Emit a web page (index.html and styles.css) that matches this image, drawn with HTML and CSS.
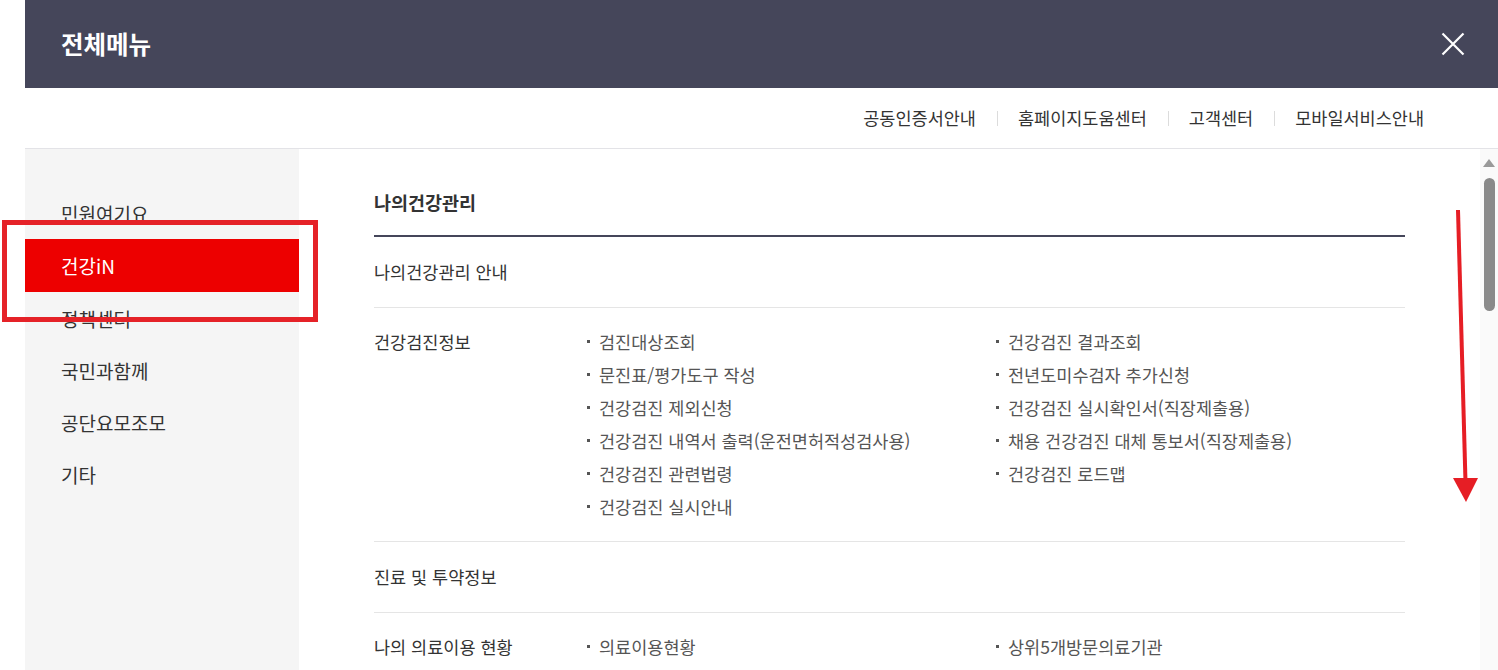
FILE: index.html
```html
<!DOCTYPE html>
<html lang="ko">
<head>
<meta charset="utf-8">
<title>전체메뉴</title>
<link rel="stylesheet" href="styles.css">
</head>
<body>
<div class="wrap">
  <header class="top">
    <h1 class="title">전체메뉴</h1>
    <button class="close" aria-label="닫기">
      <svg width="24" height="24" viewBox="0 0 24 24"><path d="M1.5 1.5 L22.5 22.5 M22.5 1.5 L1.5 22.5" stroke="#fff" stroke-width="2.2" fill="none"/></svg>
    </button>
  </header>
  <nav class="util">
    <a class="util-link">공동인증서안내</a>
    <a class="util-link">홈페이지도움센터</a>
    <a class="util-link">고객센터</a>
    <a class="util-link">모바일서비스안내</a>
  </nav>
  <div class="body">
    <aside class="side">
      <a class="side-item">민원여기요</a>
      <a class="side-item active">건강iN</a>
      <a class="side-item">정책센터</a>
      <a class="side-item">국민과함께</a>
      <a class="side-item">공단요모조모</a>
      <a class="side-item">기타</a>
    </aside>
    <main class="main">
      <h2 class="sec-title">나의건강관리</h2>
      <div class="row simple">나의건강관리 안내</div>
      <div class="row grid">
        <div class="label">건강검진정보</div>
        <ul class="list">
          <li>검진대상조회</li>
          <li>문진표/평가도구 작성</li>
          <li>건강검진 제외신청</li>
          <li>건강검진 내역서 출력(운전면허적성검사용)</li>
          <li>건강검진 관련법령</li>
          <li>건강검진 실시안내</li>
        </ul>
        <ul class="list">
          <li>건강검진 결과조회</li>
          <li>전년도미수검자 추가신청</li>
          <li>건강검진 실시확인서(직장제출용)</li>
          <li>채용 건강검진 대체 통보서(직장제출용)</li>
          <li>건강검진 로드맵</li>
        </ul>
      </div>
      <div class="row simple">진료 및 투약정보</div>
      <div class="row grid">
        <div class="label">나의 의료이용 현황</div>
        <ul class="list">
          <li>의료이용현황</li>
        </ul>
        <ul class="list">
          <li>상위5개방문의료기관</li>
        </ul>
      </div>
    </main>
    <div class="scrollbar">
      <span class="sb-up"></span>
      <span class="sb-thumb"></span>
    </div>
  </div>
</div>
<div class="mark-box"></div>
<svg class="mark-arrow" width="40" height="300" viewBox="0 0 40 300">
  <path d="M8 0 L15.5 272" stroke="#e61e25" stroke-width="4" fill="none"/>
  <path d="M3 268 L28 268 L16 292 Z" fill="#e61e25"/>
</svg>
</body>
</html>
```
FILE: styles.css
```css
* { box-sizing: border-box; margin: 0; padding: 0; }
html, body { height: 100%; }
body {
  background: #fff;
  font-family: "Noto Sans CJK KR", "Noto Sans", sans-serif;
  color: #333;
  overflow: hidden;
  position: relative;
}
.wrap { margin-left: 25px; height: 670px; display: flex; flex-direction: column; }
.top {
  height: 88px;
  background: #45465a;
  display: flex;
  align-items: center;
  justify-content: space-between;
  padding: 0 33px 0 36px;
  flex: none;
}
.title { color: #fff; font-size: 24.5px; font-weight: 700; line-height: 1; }
.close { background: none; border: 0; width: 24px; height: 24px; display: block; }
.close svg { display: block; }
.util {
  height: 61px;
  border-bottom: 1px solid #e3e3e7;
  display: flex;
  justify-content: flex-end;
  align-items: center;
  padding-right: 53px;
  flex: none;
}
.util-link {
  font-size: 17.5px;
  color: #333;
  padding: 0 21px;
  position: relative;
  line-height: 22px;
}
.util-link + .util-link::before {
  content: "";
  position: absolute;
  left: 0;
  top: 4px;
  width: 1px;
  height: 15px;
  background: #dcdcdc;
}
.body { flex: 1; display: flex; min-height: 0; }
.side {
  width: 274px;
  background: #f5f5f5;
  padding-top: 38px;
  display: flex;
  flex-direction: column;
  flex: none;
}
.side-item {
  height: 52px;
  display: flex;
  align-items: center;
  padding-left: 36px;
  font-size: 19px;
  color: #333;
}
.side-item.active { background: #ed0000; color: #fff; height: 53px; }
.main {
  flex: 1;
  padding: 30px 75px 0 75px;
  overflow: hidden;
  color: #444;
}
.sec-title {
  font-size: 18.5px;
  font-weight: 700;
  color: #333;
  line-height: 46px;
  padding-bottom: 10px;
  border-bottom: 2px solid #45465a;
}
.row { border-bottom: 1px solid #e5e5e5; font-size: 17.5px; }
.row.simple { padding: 23px 0; line-height: 24px; color: #333; }
.row.grid {
  display: grid;
  grid-template-columns: 213px 1fr 1fr;
  padding: 17px 0 18px;
  line-height: 33px;
}
.label { color: #333; }
.list { list-style: none; }
.list li { display: flex; align-items: center; color: #555; }
.list li::before {
  content: "";
  width: 3px;
  height: 3px;
  background: #555;
  margin-right: 9px;
  margin-top: -1px;
  flex: none;
}
.scrollbar { width: 18px; background: #fafafa; flex: none; position: relative; }
.sb-up {
  position: absolute;
  left: 3px;
  top: 10px;
  width: 0; height: 0;
  border-left: 6px solid transparent;
  border-right: 6px solid transparent;
  border-bottom: 8px solid #9a9a9a;
}
.sb-thumb {
  position: absolute;
  left: 4px;
  top: 29px;
  width: 11px;
  height: 133px;
  background: #8a8a8a;
  border-radius: 6px;
}
.mark-box {
  position: absolute;
  left: 2px;
  top: 220px;
  width: 316px;
  height: 102px;
  border: 5px solid #e52228;
}
.mark-arrow { position: absolute; left: 1450px; top: 210px; }
```
